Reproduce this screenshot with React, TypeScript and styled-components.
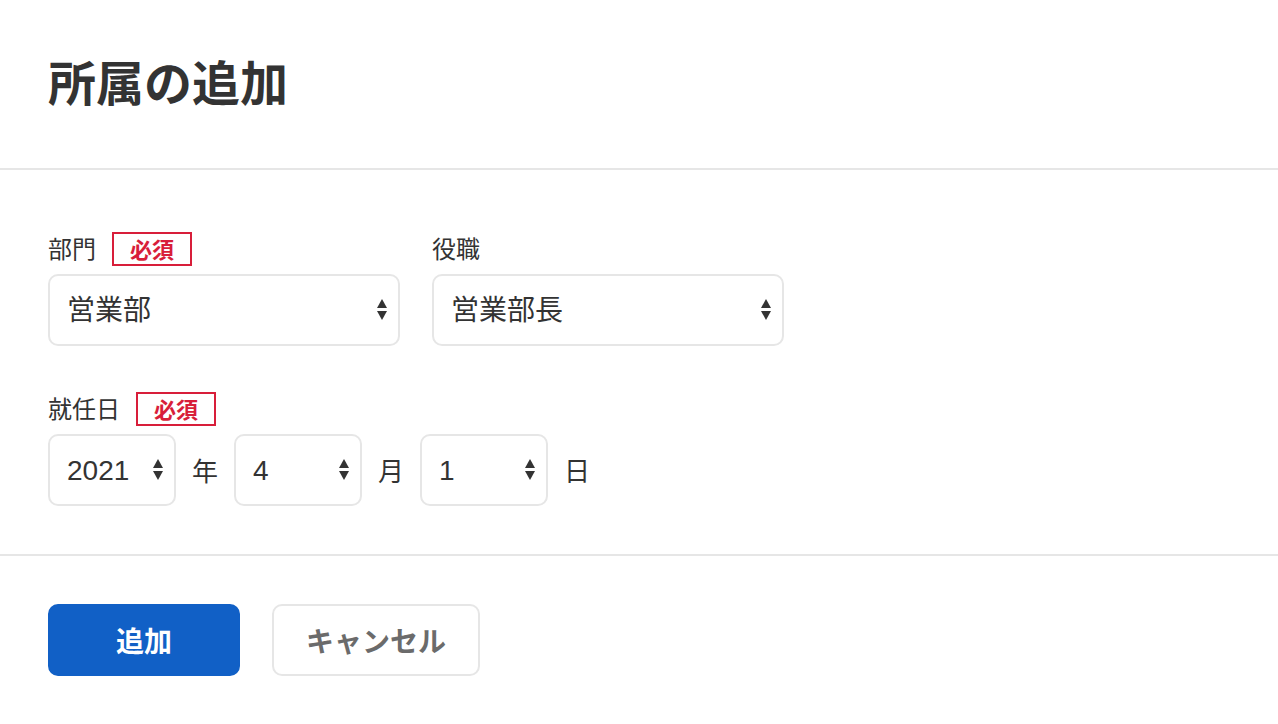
import React from "react";
import styled, { createGlobalStyle } from "styled-components";

const GlobalStyle = createGlobalStyle`
  html, body { margin: 0; padding: 0; background: #ffffff; }
  body {
    font-family: "Noto Sans CJK JP", "Noto Sans", sans-serif;
    color: #333333;
  }
  * { box-sizing: border-box; }
`;

const Page = styled.div`
  width: 1278px;
  min-height: 724px;
  display: flex;
  flex-direction: column;
  background: #ffffff;
`;

const Header = styled.header`
  height: 170px;
  display: flex;
  align-items: center;
  padding: 0 48px 8px;
  border-bottom: 2px solid #e6e6e6;
`;

const Title = styled.h1`
  margin: 0;
  font-size: 48px;
  font-weight: 700;
  line-height: 1;
  color: #333333;
  letter-spacing: 0;
`;

const Body = styled.section`
  padding: 62px 48px 48px;
  display: flex;
  flex-direction: column;
  gap: 46px;
  border-bottom: 2px solid #e6e6e6;
`;

const Row = styled.div`
  display: flex;
  gap: 32px;
`;

const Field = styled.div`
  display: flex;
  flex-direction: column;
  gap: 8px;
`;

const LabelRow = styled.div`
  height: 34px;
  display: flex;
  align-items: center;
  gap: 16px;
`;

const Label = styled.label`
  font-size: 24px;
  line-height: 1;
  color: #333333;
  padding-bottom: 3px;
`;

const Required = styled.span`
  display: inline-flex;
  align-items: center;
  justify-content: center;
  height: 34px;
  padding: 0 16px 2px;
  border: 2px solid #d81e3a;
  color: #d81e3a;
  font-size: 22px;
  font-weight: 700;
  line-height: 1;
`;

const SelectWrap = styled.div<{ $width: number }>`
  position: relative;
  width: ${(p) => p.$width}px;
  height: 72px;
`;

const NativeSelect = styled.select`
  appearance: none;
  -webkit-appearance: none;
  width: 100%;
  height: 100%;
  margin: 0;
  padding: 0 40px 0 17px;
  border: 2px solid #e6e6e6;
  border-radius: 10px;
  background: #ffffff;
  font-family: "Liberation Sans", "Noto Sans CJK JP", sans-serif;
  font-size: 28px;
  color: #333333;
  outline: none;
`;

const Arrow = styled.svg`
  position: absolute;
  right: 12px;
  top: 50%;
  transform: translateY(-50%);
  pointer-events: none;
`;

const DateRow = styled.div`
  display: flex;
  align-items: center;
`;

const Unit = styled.span`
  font-size: 26px;
  line-height: 1;
  margin: 0 16px;
  color: #333333;
`;

const Footer = styled.footer`
  padding: 48px 48px 48px;
  display: flex;
  gap: 32px;
`;

const Button = styled.button<{ $primary?: boolean }>`
  height: 72px;
  min-width: 192px;
  padding: 0 32px;
  border-radius: 10px;
  font-family: "Noto Sans CJK JP", "Noto Sans", sans-serif;
  font-size: 28px;
  font-weight: 700;
  cursor: pointer;
  border: 2px solid ${(p) => (p.$primary ? "#1160c6" : "#e6e6e6")};
  background: ${(p) => (p.$primary ? "#1160c6" : "#ffffff")};
  color: ${(p) => (p.$primary ? "#ffffff" : "#6b6b6b")};
`;

const SelectArrows = () => (
  <Arrow width="12" height="22" viewBox="0 0 12 22">
    <path d="M6 0 L11 9 L1 9 Z" fill="#333333" />
    <path d="M1 12 L11 12 L6 21 Z" fill="#333333" />
  </Arrow>
);

type SelectProps = { width: number; value: string; options: string[] };

const Select = ({ width, value, options }: SelectProps) => (
  <SelectWrap $width={width}>
    <NativeSelect defaultValue={value}>
      {options.map((o) => (
        <option key={o} value={o}>
          {o}
        </option>
      ))}
    </NativeSelect>
    <SelectArrows />
  </SelectWrap>
);

export default function App() {
  return (
    <>
      <GlobalStyle />
      <Page>
        <Header>
          <Title>所属の追加</Title>
        </Header>
        <Body>
          <Row>
            <Field>
              <LabelRow>
                <Label>部門</Label>
                <Required>必須</Required>
              </LabelRow>
              <Select width={352} value="営業部" options={["営業部", "開発部", "総務部"]} />
            </Field>
            <Field>
              <LabelRow>
                <Label>役職</Label>
              </LabelRow>
              <Select width={352} value="営業部長" options={["営業部長", "課長", "主任"]} />
            </Field>
          </Row>
          <Field>
            <LabelRow>
              <Label>就任日</Label>
              <Required>必須</Required>
            </LabelRow>
            <DateRow>
              <Select width={128} value="2021" options={["2020", "2021", "2022"]} />
              <Unit>年</Unit>
              <Select width={128} value="4" options={["1", "2", "3", "4", "5", "6", "7", "8", "9", "10", "11", "12"]} />
              <Unit>月</Unit>
              <Select width={128} value="1" options={["1", "2", "3", "4", "5"]} />
              <Unit>日</Unit>
            </DateRow>
          </Field>
        </Body>
        <Footer>
          <Button $primary>追加</Button>
          <Button>キャンセル</Button>
        </Footer>
      </Page>
    </>
  );
}
